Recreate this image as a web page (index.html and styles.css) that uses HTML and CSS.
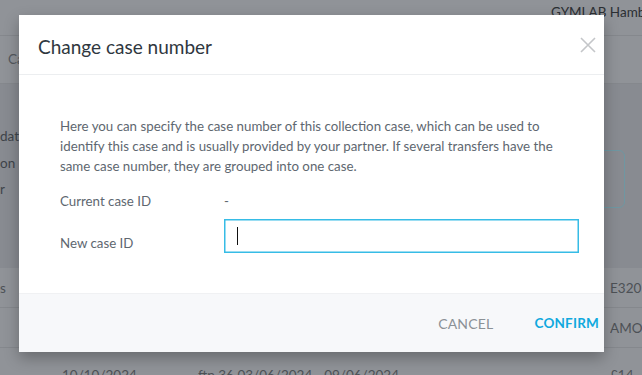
FILE: index.html
```html
<!DOCTYPE html>
<html>
<head>
<meta charset="utf-8">
<link rel="stylesheet" href="styles.css">
</head>
<body>
<div class="page">
  <div class="topbar"><span class="org">GYMLAB Hamburg</span></div>
  <div class="tabs"><span class="tab">Cases</span></div>
  <div class="card">
    <div class="card-line">date</div>
    <div class="card-line">on</div>
    <div class="card-line">r</div>
    <div class="card-box"></div>
  </div>
  <div class="row"><span class="c1">s</span><span class="c-right">E320</span></div>
  <div class="row"><span class="c1"></span><span class="c-right">AMOUNT</span></div>
  <div class="row last"><span class="c-date">10/10/2024</span><span class="c-desc">ftp 36 03/06/2024 - 09/06/2024</span><span class="c-right">£14</span></div>
</div>

<div class="overlay">
  <div class="modal">
    <div class="modal-header">
      <h2 class="modal-title">Change case number</h2>
      <span class="close" aria-label="Close">
        <svg width="16" height="16" viewBox="0 0 16 16"><path d="M1 1 L15 15 M15 1 L1 15" stroke="#c4c6c9" stroke-width="1.6" fill="none"/></svg>
      </span>
    </div>
    <div class="modal-body">
      <p class="desc">Here you can specify the case number of this collection case, which can be used to identify this case and is usually provided by your partner. If several transfers have the same case number, they are grouped into one case.</p>
      <div class="field">
        <span class="label">Current case ID</span>
        <span class="value">-</span>
      </div>
      <div class="field field-input">
        <span class="label">New case ID</span>
        <div class="input"><span class="caret"></span></div>
      </div>
    </div>
    <div class="modal-footer">
      <button class="btn cancel">CANCEL</button>
      <button class="btn confirm">CONFIRM</button>
    </div>
  </div>
</div>
</body>
</html>
```

FILE: styles.css
```css
* { box-sizing: border-box; }
html, body { margin: 0; padding: 0; }
body {
  width: 642px;
  height: 375px;
  overflow: hidden;
  font-family: "Lato", "Noto Sans", sans-serif;
  background: #909398;
  position: relative;
}
.page { width: 642px; height: 375px; color: #4a4f55; font-size: 13.5px; }
.topbar {
  height: 36px;
  border-bottom: 1px solid #85888d;
  display: flex;
  justify-content: flex-end;
  align-items: flex-start;
  padding-top: 4px;
}
.org { color: #2b2f33; font-size: 13.5px; width: 91px; white-space: nowrap; overflow: hidden; }
.tabs {
  height: 48px;
  border-bottom: 1px solid #85888d;
  padding: 15px 0 0 8px;
  color: #55595e;
}
.card {
  height: 184px;
  background: #888b91;
  padding: 44px 0 0 0;
  position: relative;
  color: #3f444a;
}
.card-line { height: 26.5px; }
.card-box {
  position: absolute;
  right: 17px;
  top: 66px;
  width: 60px;
  height: 58px;
  border: 1px solid #6f97a2;
  border-radius: 6px;
}
.row {
  height: 40px;
  border-bottom: 1px solid #85888d;
  display: flex;
  align-items: center;
  color: #4d5156;
  position: relative;
}
.row.last { border-bottom: none; align-items: flex-start; padding-top: 19px; }
.c1 { margin-left: 0; }
.c-right { position: absolute; left: 610px; width: 32px; overflow: hidden; white-space: nowrap; }
.c-date { margin-left: 62px; width: 136px; }

.overlay {
  position: absolute;
  inset: 0;
  padding: 15px 0 0 19px;
}
.modal {
  width: 585px;
  background: #fff;
  box-shadow: 0 6px 14px rgba(0, 0, 0, 0.28);
  display: flex;
  flex-direction: column;
}
.modal-header {
  height: 60px;
  border-bottom: 1px solid #eceef0;
  display: flex;
  align-items: center;
  justify-content: space-between;
  padding: 0 8px 0 19px;
}
.modal-title {
  margin: 0;
  font-weight: 400;
  font-size: 19px;
  color: #2f3740;
  padding-top: 3px;
}
.close { display: flex; padding-top: 0; }
.modal-body {
  padding: 41px 25px 0 41px;
  height: 218px;
}
.desc {
  margin: 0 0 15px 0;
  font-size: 13.3px;
  line-height: 20px;
  color: #5e6770;
}
.field {
  display: flex;
  align-items: center;
  color: #5e6770;
  font-size: 13.3px;
  line-height: 20px;
}
.field-input { align-items: flex-start; margin-top: 8px; }
.field-input .label { padding-top: 14px; }
.label { width: 164px; flex: none; }
.value { color: #5e6770; }
.input {
  width: 355px;
  height: 34px;
  border: 1px solid #36bce6;
  box-shadow: inset 0 0 0 0.5px #36bce6;
  display: flex;
  align-items: center;
  padding-left: 12px;
}
.caret { width: 1px; height: 18px; background: #111; }
.modal-footer {
  height: 59px;
  background: #f7f8fa;
  border-top: 1px solid #f0f1f3;
  display: flex;
  justify-content: flex-end;
  align-items: center;
  gap: 41px;
  padding: 0 5px 0 0;
}
.btn {
  border: none;
  background: none;
  font-family: inherit;
  font-size: 14px;
  letter-spacing: 0.2px;
  padding: 0;
  cursor: pointer;
}
.cancel { color: #8b9196; }
.confirm { color: #10a9de; font-weight: 700; font-size: 13.5px; }
```
